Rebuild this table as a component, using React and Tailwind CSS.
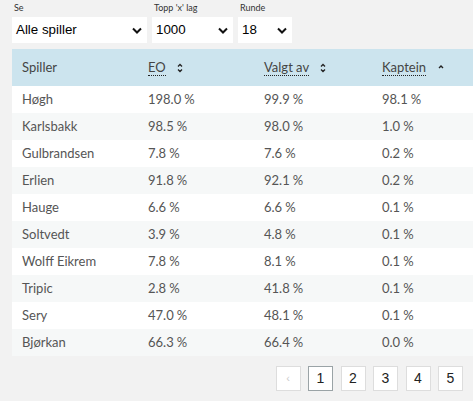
import React from 'react';

const rows = [
  ['Høgh', '198.0', '99.9', '98.1'],
  ['Karlsbakk', '98.5', '98.0', '1.0'],
  ['Gulbrandsen', '7.8', '7.6', '0.2'],
  ['Erlien', '91.8', '92.1', '0.2'],
  ['Hauge', '6.6', '6.6', '0.1'],
  ['Soltvedt', '3.9', '4.8', '0.1'],
  ['Wolff Eikrem', '7.8', '8.1', '0.1'],
  ['Tripic', '2.8', '41.8', '0.1'],
  ['Sery', '47.0', '48.1', '0.1'],
  ['Bjørkan', '66.3', '66.4', '0.0'],
];

const Chevron = () => (
  <svg width="10" height="7" viewBox="0 0 10 7" className="shrink-0">
    <path d="M1 1.5 L5 5.5 L9 1.5" fill="none" stroke="#111" strokeWidth="2" />
  </svg>
);

const FakeSelect = ({ label, value, width }) => (
  <div className="flex flex-col">
    <span className="text-[9px] leading-[12px] h-[12px] text-[#333] pl-[2px]">{label}</span>
    <div className={`mt-[3px] h-[26px] bg-white flex items-center justify-between pl-[4px] pr-[5px] ${width}`}>
      <span className="text-[13.33px] text-black font-['Liberation_Sans',Arial,sans-serif]">{value}</span>
      <Chevron />
    </div>
  </div>
);

const SortBoth = () => (
  <svg width="6" height="10" viewBox="0 0 6 10" className="ml-[11px]">
    <path d="M1 3.5 L3 1.5 L5 3.5" fill="none" stroke="#222" strokeWidth="1.3" />
    <path d="M1 6.5 L3 8.5 L5 6.5" fill="none" stroke="#222" strokeWidth="1.3" />
  </svg>
);

const SortUp = () => (
  <svg width="6" height="10" viewBox="0 0 6 10" className="ml-[12px]">
    <path d="M1 5 L3 3 L5 5" fill="none" stroke="#222" strokeWidth="1.4" />
  </svg>
);

const Abbr = ({ children }) => (
  <span className="border-b border-dotted border-[#222] leading-[15px]">{children}</span>
);

const Pct = ({ v }) => (
  <>
    {v}
    <span className="ml-[3px]">%</span>
  </>
);

export default function App() {
  return (
    <div className="w-[473px] h-[401px] overflow-hidden bg-[#f2f2f2] font-['Lato',sans-serif]">
      <div className="flex gap-[5px] pl-[12px] pt-[2px]">
        <FakeSelect label="Se" value="Alle spiller" width="w-[135px]" />
        <FakeSelect label="Topp 'x' lag" value="1000" width="w-[81px]" />
        <FakeSelect label="Runde" value="18" width="w-[54px]" />
      </div>

      <div className="ml-[12px] mt-[6px] w-[480px]">
        <div className="h-[37px] bg-[#cce4ee] flex items-center text-[13px] text-[#444]">
          <div className="w-[126px] pl-[10px]">Spiller</div>
          <div className="w-[116px] pl-[10px] flex items-center"><Abbr>EO</Abbr><SortBoth /></div>
          <div className="w-[118px] pl-[10px] flex items-center"><Abbr>Valgt av</Abbr><SortBoth /></div>
          <div className="flex-1 pl-[10px] flex items-center"><Abbr>Kaptein</Abbr><SortUp /></div>
        </div>
        {rows.map((r, i) => (
          <div
            key={r[0]}
            className={`h-[27px] flex items-center text-[13px] text-[#555] ${i % 2 === 0 ? 'bg-white' : 'bg-[#f6f8f8]'}`}
          >
            <div className="w-[126px] pl-[10px]">{r[0]}</div>
            <div className="w-[116px] pl-[10px]"><Pct v={r[1]} /></div>
            <div className="w-[118px] pl-[10px]"><Pct v={r[2]} /></div>
            <div className="flex-1 pl-[10px]"><Pct v={r[3]} /></div>
          </div>
        ))}
      </div>

      <div className="flex justify-end gap-[7.5px] pr-[10px] mt-[10px] font-['Liberation_Sans',Arial,sans-serif]">
        <div className="w-[25px] h-[25px] bg-white border border-[#ddd] flex items-center justify-center text-[11px] text-[#ccc]">‹</div>
        <div className="w-[25px] h-[25px] bg-white border border-[#9aa3a6] flex items-center justify-center text-[14px] text-[#222]">1</div>
        {['2', '3', '4', '5'].map((p) => (
          <div key={p} className="w-[25px] h-[25px] bg-white border border-[#ddd] flex items-center justify-center text-[14px] text-[#222]">{p}</div>
        ))}
      </div>
    </div>
  );
}
